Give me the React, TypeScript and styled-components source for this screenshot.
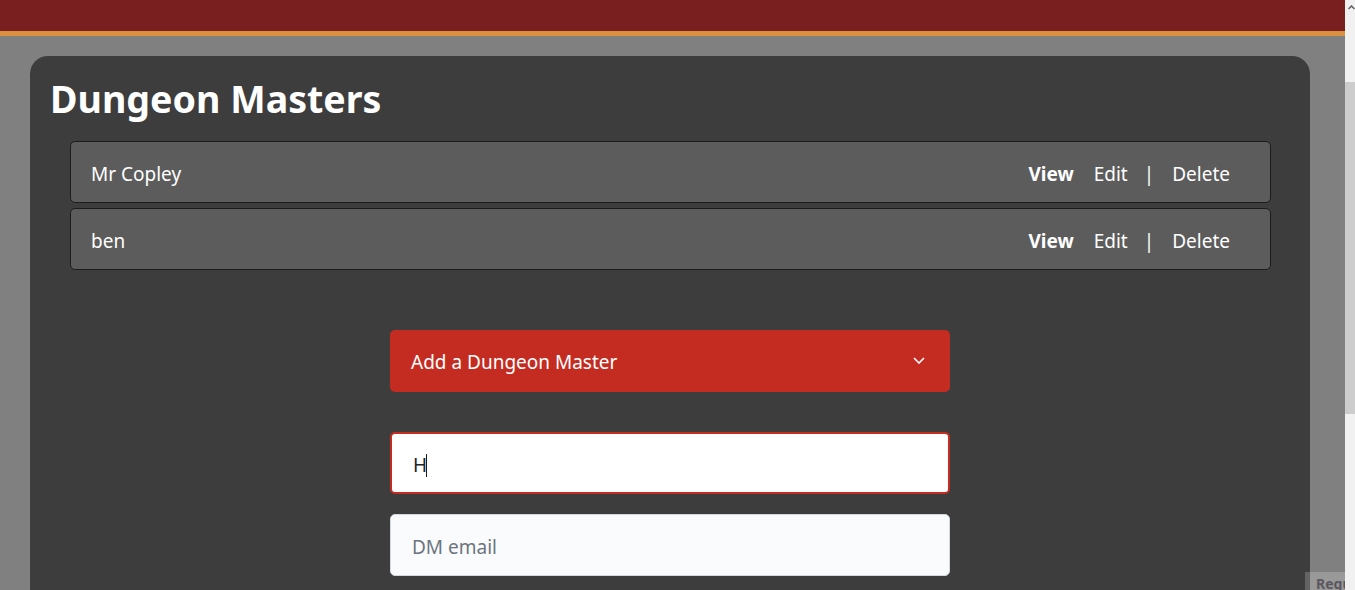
import React from "react";
import styled, { createGlobalStyle } from "styled-components";

const GlobalStyle = createGlobalStyle`
  html, body {
    margin: 0;
    padding: 0;
    background: #808080;
    font-family: "Noto Sans", "Open Sans", sans-serif;
  }
  * { box-sizing: border-box; }
`;

const Page = styled.div`
  display: flex;
  height: 100vh;
  overflow: hidden;
`;

const Main = styled.div`
  flex: 1;
  display: flex;
  flex-direction: column;
  min-width: 0;
  position: relative;
`;

const TopBar = styled.header`
  height: 36px;
  flex-shrink: 0;
  background: #7a1f1f;
  border-bottom: 5px solid #d9903f;
`;

const Content = styled.div`
  flex: 1;
  display: flex;
  padding: 20px 35px 0 30px;
`;

const Card = styled.section`
  flex: 1;
  background: #3d3d3d;
  border-radius: 18px 18px 0 0;
  padding: 19px 39px 0 40px;
  display: flex;
  flex-direction: column;
`;

const Title = styled.h1`
  margin: 0 0 18px -20px;
  font-size: 37.6px;
  line-height: 48px;
  font-weight: 700;
  color: #ffffff;
`;

const List = styled.div`
  display: flex;
  flex-direction: column;
  gap: 5px;
`;

const Row = styled.div`
  height: 62px;
  display: flex;
  align-items: center;
  justify-content: space-between;
  padding: 3px 40px 0 20px;
  background: #5c5c5c;
  border: 1px solid #1c1c1c;
  border-radius: 5px;
  color: #ffffff;
  font-size: 19px;
`;

const Name = styled.span``;

const Actions = styled.div`
  display: flex;
  align-items: center;
  gap: 20px;
`;

const Action = styled.span<{ $bold?: boolean }>`
  font-weight: ${(p) => (p.$bold ? 700 : 400)};
  color: #ffffff;
`;

const Separator = styled.span`
  margin: 0 -2px 0 -4px;
  color: #ffffff;
`;

const Form = styled.div`
  width: 561px;
  padding-right: 1px;
  margin: 60px auto 0;
  display: flex;
  flex-direction: column;
`;

const AccordionButton = styled.button`
  height: 62px;
  display: flex;
  align-items: center;
  justify-content: space-between;
  padding: 2px 25px 0 21px;
  background: #c42c22;
  border: none;
  border-radius: 5px;
  color: #ffffff;
  font-family: inherit;
  font-size: 19px;
  text-align: left;
  margin-bottom: 40px;
`;

const Chevron = styled.svg`
  margin-top: -4px;
`;

const Field = styled.div`
  position: relative;
  margin-bottom: 20px;
`;

const Input = styled.input<{ $active?: boolean }>`
  display: block;
  height: 62px;
  width: 100%;
  padding: 3px 21px 0;
  font-family: inherit;
  font-size: 19px;
  color: #212529;
  background: ${(p) => (p.$active ? "#ffffff" : "#f9fbfc")};
  border: ${(p) => (p.$active ? "2px solid #c42c22" : "1px solid #d3d9df")};
  border-radius: 5px;
  outline: none;
  caret-color: transparent;
  &::placeholder {
    color: #6c757d;
  }
`;

const Caret = styled.span`
  position: absolute;
  left: 36px;
  top: 22px;
  width: 1px;
  height: 23px;
  background: #1b1b1b;
  pointer-events: none;
`;

const ScrollTrack = styled.div`
  width: 10px;
  flex-shrink: 0;
  background: #f1f1f1;
  display: flex;
  flex-direction: column;
`;

const ScrollArrow = styled.div`
  height: 82px;
  width: 100%;
  display: flex;
  justify-content: center;
  padding-top: 5px;
  padding-left: 2px;
`;

const ScrollThumb = styled.div`
  width: 100%;
  height: 332px;
  background: #cdcdcd;
`;

const Badge = styled.div`
  position: absolute;
  right: 0;
  bottom: 0;
  width: 40px;
  height: 18px;
  background: rgba(255, 255, 255, 0.2);
  overflow: hidden;
  padding: 4px 0 0 11px;
  font-family: "Noto Sans", sans-serif;
  font-size: 14px;
  font-weight: 700;
  line-height: 16px;
  color: #5b5760;
  white-space: nowrap;
`;

const dms = ["Mr Copley", "ben"];

export default function App() {
  return (
    <>
      <GlobalStyle />
      <Page>
        <Main>
          <TopBar />
          <Content>
            <Card>
              <Title>Dungeon Masters</Title>
              <List>
                {dms.map((n) => (
                  <Row key={n}>
                    <Name>{n}</Name>
                    <Actions>
                      <Action $bold>View</Action>
                      <Action>Edit</Action>
                      <Separator>|</Separator>
                      <Action>Delete</Action>
                    </Actions>
                  </Row>
                ))}
              </List>
              <Form>
                <AccordionButton>
                  <span>Add a Dungeon Master</span>
                  <Chevron width="12" height="7" viewBox="0 0 12 7">
                    <polyline
                      points="1,1 6,6 11,1"
                      fill="none"
                      stroke="#ffffff"
                      strokeWidth="1.6"
                    />
                  </Chevron>
                </AccordionButton>
                <Field>
                  <Input $active defaultValue="H" />
                  <Caret />
                </Field>
                <Field>
                  <Input placeholder="DM email" />
                </Field>
              </Form>
            </Card>
          </Content>
          <Badge>Request</Badge>
        </Main>
        <ScrollTrack>
          <ScrollArrow>
            <svg width="7" height="5" viewBox="0 0 7 5">
              <polyline points="0.5,4 3.5,1 6.5,4" fill="none" stroke="#606060" strokeWidth="1.5" />
            </svg>
          </ScrollArrow>
          <ScrollThumb />
        </ScrollTrack>
      </Page>
    </>
  );
}
